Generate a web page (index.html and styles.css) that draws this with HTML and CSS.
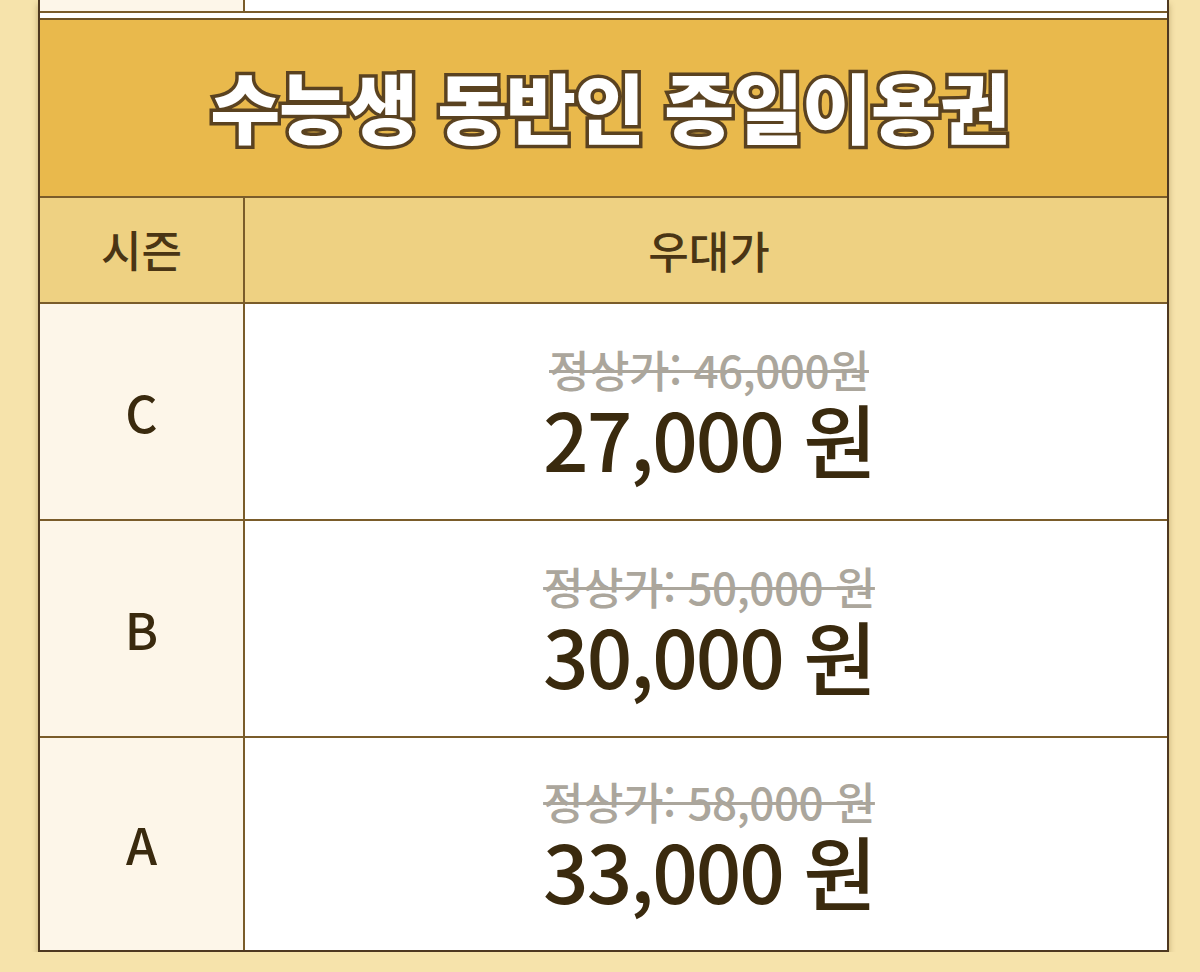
FILE: index.html
```html
<!DOCTYPE html>
<html lang="ko">
<head>
<meta charset="utf-8">
<title>수능생 동반인 종일이용권</title>
<link rel="stylesheet" href="styles.css">
</head>
<body>
<div class="board">
  <div class="prev-row">
    <div class="prev-season"></div>
    <div class="prev-price"></div>
  </div>
  <div class="gap"></div>
  <section class="ticket">
    <h2 class="title">수능생 동반인 종일이용권</h2>
    <div class="row head">
      <div class="cell season">시즌</div>
      <div class="cell price">우대가</div>
    </div>
    <div class="row">
      <div class="cell season">C</div>
      <div class="cell price">
        <span class="regular">정상가: 46,000원</span>
        <span class="sale">27,000 원</span>
      </div>
    </div>
    <div class="row">
      <div class="cell season">B</div>
      <div class="cell price">
        <span class="regular">정상가: 50,000 원</span>
        <span class="sale">30,000 원</span>
      </div>
    </div>
    <div class="row last">
      <div class="cell season">A</div>
      <div class="cell price">
        <span class="regular">정상가: 58,000 원</span>
        <span class="sale">33,000 원</span>
      </div>
    </div>
  </section>
</div>
</body>
</html>
```
FILE: styles.css
```css
html, body {
  margin: 0;
  padding: 0;
  background: #f6e3ab;
  font-family: "Noto Sans CJK KR", "Noto Sans", sans-serif;
  color: #3a2a0e;
}

.board {
  margin-left: 38px;
  width: 1131px;
  box-sizing: border-box;
  background: #ffffff;
  border-left: 2px solid #4e3820;
  border-right: 2px solid #4e3820;
  border-bottom: 2px solid #4e3820;
  box-shadow: 0 4px 6px rgba(90, 60, 10, 0.35);
}

.prev-row {
  display: grid;
  grid-template-columns: 205px 1fr;
  height: 11px;
  border-bottom: 2px solid #7a5c2a;
}
.prev-season {
  background: #fdf6e9;
  border-right: 2px solid #7a5c2a;
}
.prev-price {
  background: #ffffff;
}

.gap {
  height: 5px;
  background: #ffffff;
}

.ticket {
  border-top: 2px solid #6e5224;
}

.title {
  margin: 0;
  height: 178px;
  display: flex;
  align-items: center;
  justify-content: center;
  background: #e9b94c;
  border-bottom: 2px solid #7a5c2a;
  font-size: 76px;
  font-weight: 900;
  letter-spacing: -1px;
  color: #ffffff;
  -webkit-text-stroke: 7px #5a4220;
  paint-order: stroke fill;
  padding-bottom: 6px;
  padding-left: 12px;
  box-sizing: border-box;
}

.row {
  display: grid;
  grid-template-columns: 205px 1fr;
  height: 215px;
  border-bottom: 2px solid #7a5c2a;
}
.row.head {
  height: 104px;
  background: #eed182;
}
.row.last {
  border-bottom: none;
  height: 212px;
}

.cell {
  display: flex;
  align-items: center;
  justify-content: center;
}
.season {
  border-right: 2px solid #7a5c2a;
  background: #fdf6e9;
  font-size: 50px;
  font-weight: 500;
  padding-bottom: 2px;
  box-sizing: border-box;
}
.head .season, .head .price {
  background: #eed182;
  font-size: 44px;
  font-weight: 500;
  color: #4a3514;
}
.price {
  flex-direction: column;
  background: #ffffff;
  padding-left: 6px;
}

.regular {
  display: block;
  font-size: 44px;
  font-weight: 500;
  color: #aba69c;
  text-decoration: line-through;
  text-decoration-thickness: 3px;
  letter-spacing: -0.5px;
  line-height: 46px;
  margin-top: 4px;
}
.sale {
  display: block;
  font-size: 80px;
  font-weight: 500;
  color: #3a2a0e;
  letter-spacing: -2px;
  line-height: 90px;
}
```
